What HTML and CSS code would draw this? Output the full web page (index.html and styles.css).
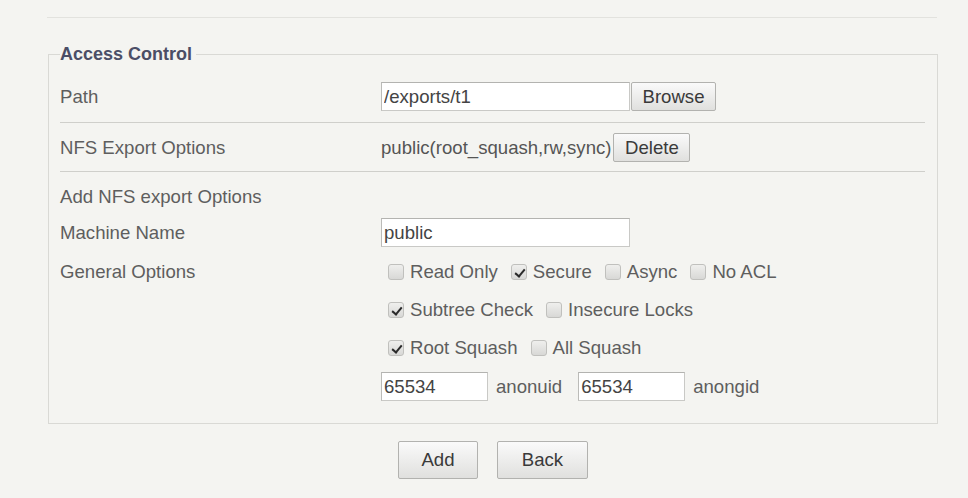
FILE: index.html
```html
<!DOCTYPE html>
<html>
<head>
<meta charset="utf-8">
<link rel="stylesheet" href="styles.css">
</head>
<body>
<div class="page">
  <hr class="top-rule">
  <fieldset class="panel">
    <legend class="panel-title">Access Control</legend>

    <div class="row row-path">
      <span class="label">Path</span>
      <div class="value">
        <input class="field field-path" type="text" value="/exports/t1">
        <button class="btn btn-browse" type="button">Browse</button>
      </div>
    </div>
    <div class="sep sep-1"></div>

    <div class="row row-nfs">
      <span class="label">NFS Export Options</span>
      <div class="value">
        <span class="val-text">public(root_squash,rw,sync)</span>
        <button class="btn btn-delete" type="button">Delete</button>
      </div>
    </div>
    <div class="sep sep-2"></div>

    <div class="row row-add">
      <span class="label">Add NFS export Options</span>
    </div>

    <div class="row row-machine">
      <span class="label">Machine Name</span>
      <div class="value">
        <input class="field field-machine" type="text" value="public">
      </div>
    </div>

    <div class="row row-opt1">
      <span class="label">General Options</span>
      <div class="value opts">
        <label class="opt"><span class="cb"></span>Read Only</label>
        <label class="opt"><span class="cb on"></span>Secure</label>
        <label class="opt"><span class="cb"></span>Async</label>
        <label class="opt"><span class="cb"></span>No ACL</label>
      </div>
    </div>
    <div class="row row-opt">
      <span class="label"></span>
      <div class="value opts">
        <label class="opt"><span class="cb on"></span>Subtree Check</label>
        <label class="opt"><span class="cb"></span>Insecure Locks</label>
      </div>
    </div>
    <div class="row row-opt">
      <span class="label"></span>
      <div class="value opts">
        <label class="opt"><span class="cb on"></span>Root Squash</label>
        <label class="opt"><span class="cb"></span>All Squash</label>
      </div>
    </div>
    <div class="row row-anon">
      <span class="label"></span>
      <div class="value">
        <input class="field field-anon" type="text" value="65534">
        <span class="anon-text">anonuid</span>
        <input class="field field-anon" type="text" value="65534">
        <span class="anon-text">anongid</span>
      </div>
    </div>
  </fieldset>

  <div class="actions">
    <button class="btn btn-big btn-add" type="button">Add</button>
    <button class="btn btn-big btn-back" type="button">Back</button>
  </div>
</div>
</body>
</html>
```

FILE: styles.css
```css
* { box-sizing: border-box; }

html, body {
  margin: 0;
  padding: 0;
  background: #f4f4f1;
}

body {
  font-family: "Liberation Sans", Arial, sans-serif;
  font-size: 18.6px;
  color: #5e5e5e;
}

.page {
  width: 968px;
  height: 498px;
  padding-top: 17px;
}

.top-rule {
  margin: 0 31px 0 47px;
  border: 0;
  border-top: 1px solid #e2e2de;
  height: 0;
}

.panel {
  margin: 24px 30px 0 48px;
  padding: 0 12px 22px 11px;
  border: 1px solid #d9d9d5;
  min-width: 0;
}

.panel-title {
  padding: 0 4px 0 0;
  margin-left: 0;
  font-weight: bold;
  font-size: 18px;
  color: #4b4e66;
  line-height: 24px;
}

.row {
  display: flex;
  align-items: center;
  height: 29px;
}

.label {
  width: 321px;
  flex: none;
}

.value {
  display: flex;
  align-items: center;
}

.row-path { margin-top: 16px; }
.sep {
  height: 1px;
  background: #cfcfcb;
}
.sep-1 { margin-top: 11px; }
.row-nfs { margin-top: 10px; }
.sep-2 { margin-top: 9px; }
.row-add { margin-top: 10px; }
.row-machine { margin-top: 7px; }
.row-opt1 { margin-top: 10px; }
.row-opt { margin-top: 9px; }
.row-anon { margin-top: 10px; height: 29px; }

.field {
  font-family: "Liberation Sans", Arial, sans-serif;
  font-size: 18.6px;
  color: #444;
  background: #fff;
  border: 1px solid #c9c9c6;
  border-top-color: #b3b3b0;
  border-left-color: #bbbbb8;
  padding: 0 2px;
  height: 29px;
  outline: none;
}

.field-path { width: 249px; }
.field-machine { width: 249px; }
.field-anon { width: 107px; height: 29px; }

.btn {
  font-family: "Liberation Sans", Arial, sans-serif;
  font-size: 18.6px;
  color: #3a3a3a;
  background: linear-gradient(#fafafa, #e0e0de);
  border: 1px solid #b2b2af;
  border-radius: 2px;
  padding: 0;
  height: 29px;
}

.btn-browse { width: 85px; margin-left: 1px; }
.btn-delete { width: 77px; margin-left: 2px; }

.val-text { color: #555; }

.opt {
  display: flex;
  align-items: center;
  margin-right: 13px;
  color: #5e5e5e;
}

.cb {
  width: 16px;
  height: 16px;
  border: 1px solid #c0c0bd;
  border-radius: 3px;
  background: linear-gradient(#efefed, #d8d8d6);
  margin: 0 6px 0 0;
  position: relative;
  flex: none;
}

.opt:first-child .cb { margin-left: 7px; }

.cb.on::after {
  content: "";
  position: absolute;
  left: 5px;
  top: 2px;
  width: 4px;
  height: 8px;
  border: solid #2a2a2a;
  border-width: 0 2.5px 2.5px 0;
  transform: rotate(40deg);
}

.anon-text {
  margin: 0 16px 0 8px;
  color: #5e5e5e;
}

.actions {
  display: flex;
  justify-content: center;
  gap: 19px;
  margin: 17px 30px 0 48px;
}

.btn-big {
  height: 38px;
}
.btn-add { width: 80px; }
.btn-back { width: 91px; }
```
